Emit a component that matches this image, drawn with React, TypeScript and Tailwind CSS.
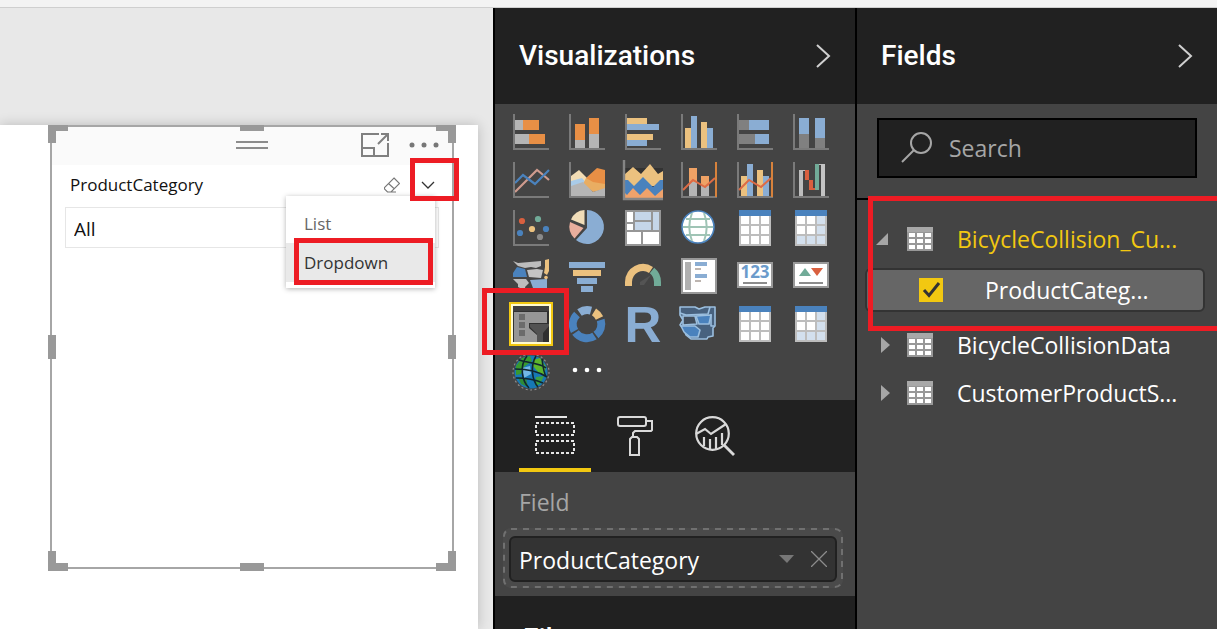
import React from "react";

const ORANGE = "#e88f45";
const BLUE = "#8aadd3";
const DEEP = "#4a82bd";
const YELLOW = "#ebc17f";
const AXIS = "#7a7a7a";
const GREEN = "#71ab98";
const RED = "#d9603f";

type Box = [number, number, number, number, string];

function Boxes({ items }: { items: Box[] }) {
  return (
    <>
      {items.map(([x, y, w, h, fill], i) => (
        <rect key={i} x={x} y={y} width={w} height={h} fill={fill} />
      ))}
    </>
  );
}

function Axes() {
  return <path d="M1 0V35H36" fill="none" stroke={AXIS} strokeWidth="2" />;
}

function TableGlyph({ matrix = false }: { matrix?: boolean }) {
  const cells: Box[] = [];
  for (let r = 0; r < 3; r++) {
    for (let c = 0; c < 3; c++) {
      cells.push([4 + c * 10, 6 + r * 10, 8, 8, matrix && (c === 2 || r === 2) ? "#d3e0ee" : "#ffffff"]);
    }
  }
  return (
    <>
      <rect x="2" y="0" width="32" height="36" fill="#bdbdbd" />
      <rect x="2" y="0" width="32" height="6" fill={DEEP} />
      <Boxes items={cells} />
    </>
  );
}

const COLUMNS: Box[] = [
  [4, 14, 6, 20, YELLOW],
  [10, 2, 6, 32, BLUE],
  [20, 8, 6, 26, YELLOW],
  [26, 14, 6, 20, BLUE],
];

const visuals: { name: string; art: React.ReactNode }[] = [
  {
    name: "Stacked bar chart",
    art: (
      <>
        <Boxes items={[[2, 6, 8, 10, "#b5b5b5"], [10, 6, 16, 10, ORANGE], [2, 20, 14, 10, "#b5b5b5"], [16, 20, 16, 10, ORANGE]]} />
        <Axes />
      </>
    ),
  },
  {
    name: "Stacked column chart",
    art: (
      <>
        <Boxes items={[[6, 10, 10, 16, ORANGE], [6, 26, 10, 8, "#b5b5b5"], [20, 4, 10, 16, ORANGE], [20, 20, 10, 14, "#b5b5b5"]]} />
        <Axes />
      </>
    ),
  },
  {
    name: "Clustered bar chart",
    art: (
      <>
        <Boxes items={[[2, 4, 20, 6, YELLOW], [2, 10, 32, 6, BLUE], [2, 20, 26, 6, YELLOW], [2, 26, 20, 6, BLUE]]} />
        <Axes />
      </>
    ),
  },
  {
    name: "Clustered column chart",
    art: (
      <>
        <Boxes items={COLUMNS} />
        <Axes />
      </>
    ),
  },
  {
    name: "100% stacked bar chart",
    art: (
      <>
        <Boxes items={[[2, 6, 10, 10, "#808080"], [12, 6, 20, 10, BLUE], [2, 20, 16, 10, "#808080"], [18, 20, 14, 10, BLUE]]} />
        <Axes />
      </>
    ),
  },
  {
    name: "100% stacked column chart",
    art: (
      <>
        <Boxes items={[[6, 4, 10, 16, BLUE], [6, 20, 10, 14, "#808080"], [22, 4, 10, 20, BLUE], [22, 24, 10, 10, "#808080"]]} />
        <Axes />
      </>
    ),
  },
  {
    name: "Line chart",
    art: (
      <>
        <path d="M2 30L24 8L29 12L36 18" fill="none" stroke="#cf9b8e" strokeWidth="2.2" />
        <path d="M2 21L10 13L22 22L36 8" fill="none" stroke={DEEP} strokeWidth="2.2" />
        <Axes />
      </>
    ),
  },
  {
    name: "Area chart",
    art: (
      <>
        <path d="M2 14L10 8L18 16L26 26L2 28Z" fill="#f2dcb4" />
        <path d="M2 19L13 16L18 22L2 26Z" fill="#a9cbe8" />
        <path d="M17 16L28 6L36 8V27L24 29Z" fill={ORANGE} />
        <path d="M17 16L24 20L36 22V27L24 30L14 22Z" fill="#e9ad62" />
        <path d="M2 24L14 20L24 30L36 26V34H2Z" fill="#b5b5b5" />
        <Axes />
      </>
    ),
  },
  {
    name: "Stacked area chart",
    art: (
      <>
        <rect x="0" y="6" width="38" height="20" fill="#333" />
        <path d="M0 12L8 5L16 12L25 2L33 12L38 9V24H0Z" fill={YELLOW} />
        <path d="M0 18L3 18L9 24L18 15L28 25L35 18H38V34H0Z" fill={DEEP} />
        <path d="M0 37V31L2 33L8 26L15 33L22 26L30 34L38 27V37Z" fill="#efa26b" />
        <path d="M-1 -2V37H38" fill="none" stroke="#858585" strokeWidth="2.4" />
      </>
    ),
  },
  {
    name: "Line and stacked column chart",
    art: (
      <>
        <Boxes items={[[8, 6, 8, 14, "#efa265"], [8, 20, 8, 14, "#b5b5b5"], [20, 14, 8, 10, "#efa265"], [20, 24, 8, 10, "#b5b5b5"]]} />
        <Axes />
        <path d="M2 28L12 18L24 25L34 16" fill="none" stroke="#dd6b45" strokeWidth="2" />
        <path d="M35 0V35" stroke="#d7823c" strokeWidth="2" />
      </>
    ),
  },
  {
    name: "Line and clustered column chart",
    art: (
      <>
        <Boxes items={COLUMNS} />
        <Axes />
        <path d="M2 28L12 18L24 25L34 16" fill="none" stroke="#dd6b45" strokeWidth="2" />
        <path d="M35 0V35" stroke="#d7823c" strokeWidth="2" />
      </>
    ),
  },
  {
    name: "Waterfall chart",
    art: (
      <>
        <Boxes
          items={[
            [6, 8, 4, 26, "#bdbdbd"],
            [6, 8, 6, 1, "#bdbdbd"],
            [12, 8, 4, 10, RED],
            [16, 18, 4, 10, RED],
            [20, 26, 2, 2, RED],
            [22, 2, 4, 26, GREEN],
            [26, 2, 2, 1, "#bdbdbd"],
            [28, 2, 4, 32, "#c4c4c4"],
          ]}
        />
        <Axes />
      </>
    ),
  },
  {
    name: "Scatter chart",
    art: (
      <>
        <Axes />
        <circle cx="9" cy="11" r="3.1" fill={RED} />
        <circle cx="25" cy="9" r="3.1" fill={GREEN} />
        <circle cx="19" cy="19" r="3.1" fill={YELLOW} />
        <circle cx="7" cy="23" r="3.1" fill={DEEP} />
        <circle cx="33" cy="19" r="3.1" fill={DEEP} />
        <circle cx="27" cy="27" r="3.1" fill="#8a8a8a" />
      </>
    ),
  },
  {
    name: "Pie chart",
    art: (
      <>
        <path d="M18 0A17 17 0 1 1 7 30L18 18Z" fill={BLUE} />
        <path d="M15.5 0V15L2 9.5A16 16 0 0 1 15.5 0Z" fill="#f0dcb8" />
        <path d="M1 12L14.5 18L5.5 28.5A17 17 0 0 1 1 12Z" fill="#e9ae9d" />
      </>
    ),
  },
  {
    name: "Treemap",
    art: (
      <>
        <rect width="36" height="36" fill="#969696" />
        <Boxes
          items={[
            [2, 2, 6, 10, "#fff"],
            [2, 14, 6, 6, "#fff"],
            [10, 2, 16, 8, "#c5d6e9"],
            [10, 12, 16, 8, "#c5d6e9"],
            [28, 2, 6, 18, "#c5d6e9"],
            [2, 22, 14, 12, "#fff"],
            [18, 22, 16, 12, "#fff"],
          ]}
        />
      </>
    ),
  },
  {
    name: "Map",
    art: (
      <>
        <circle cx="17" cy="17" r="16" fill="#fff" stroke={DEEP} strokeWidth="1.6" />
        <path d="M2 17H32M5 9H29M5 25H29M11 3C7.500 12 7.500 22 11 31M23 3C26.500 12 26.500 22 23 31" fill="none" stroke="#9fc4b5" strokeWidth="2" />
      </>
    ),
  },
  { name: "Table", art: <TableGlyph /> },
  { name: "Matrix", art: <TableGlyph matrix /> },
  {
    name: "Filled map",
    art: (
      <>
        <path d="M0 3L5 5L28 3V8L23 10L18 9L12 10L5 8Z" fill="#bdbdbd" />
        <path d="M4 9L12 11L14 19L0 19V15Z" fill={DEEP} />
        <path d="M14 12L24 11L30 12L28 20L16 19Z" fill="#c4c4c4" />
        <path d="M0 21H13L16 25L12 29L13 35L9 31L5 29V26Z" fill="#bdbdbd" />
        <path d="M17 22L34 21V30L30 31L27 30L20 30Z" fill={BLUE} />
        <path d="M32 2L36 1V13L34 17L31 15L32 9Z" fill={YELLOW} />
        <circle cx="33" cy="19.500" r="1.800" fill={YELLOW} />
      </>
    ),
  },
  {
    name: "Funnel",
    art: <Boxes items={[[0, 4, 36, 6, BLUE], [4, 12, 28, 6, YELLOW], [8, 20, 20, 6, BLUE], [12, 28, 12, 6, BLUE]]} />,
  },
  {
    name: "Gauge",
    art: (
      <>
        <path d="M3.500 28V24A14.500 15 0 0 1 26 12" fill="none" stroke={YELLOW} strokeWidth="7" />
        <path d="M27 12.500A15 15 0 0 1 32.500 24V28" fill="none" stroke={GREEN} strokeWidth="7" />
        <path d="M26 17L19 27H15V24Z" fill="#545454" />
      </>
    ),
  },
  {
    name: "Multi-row card",
    art: (
      <>
        <rect x="1" y="1" width="34" height="34" fill="#fff" stroke="#999" strokeWidth="2" />
        <Boxes
          items={[
            [4, 4, 6, 28, "#b0b0b0"],
            [14, 4, 12, 4, BLUE],
            [14, 10, 6, 2, "#bdb5b0"],
            [14, 16, 12, 4, BLUE],
            [14, 22, 6, 2, "#bdb5b0"],
          ]}
        />
      </>
    ),
  },
  {
    name: "Card",
    art: (
      <>
        <rect x="1" y="5" width="34" height="24" fill="#fff" stroke="#999" strokeWidth="2" />
        <text x="18" y="20" textAnchor="middle" fontFamily="Open Sans, sans-serif" fontWeight="700" fontSize="17" fill="#6b9bcb">
          123
        </text>
        <rect x="6" y="24" width="24" height="2" fill="#8c8c8c" />
      </>
    ),
  },
  {
    name: "KPI",
    art: (
      <>
        <rect x="1" y="5" width="34" height="24" fill="#fff" stroke="#999" strokeWidth="2" />
        <path d="M6 18L12 10L18 18Z" fill={GREEN} />
        <path d="M18 10H30L24 18Z" fill={RED} />
        <rect x="6" y="24" width="24" height="2" fill="#8c8c8c" />
      </>
    ),
  },
  {
    name: "Slicer",
    art: (
      <>
        <rect width="36" height="36" fill="#303030" />
        <rect width="36" height="5" fill="#3f3f3f" />
        <path d="M1 6H34V17H16V22L24 29V36H1Z" fill="#969696" />
        <Boxes items={[[6, 8, 6, 6, "#6b6b6b"], [6, 16, 6, 6, "#6b6b6b"], [6, 24, 6, 6, "#6b6b6b"]]} />
        <path d="M17 18H36V20L30 27V36H24V28L17 21Z" fill="#525252" />
      </>
    ),
  },
  {
    name: "Donut chart",
    art: (
      <g fill="none" strokeWidth="8">
        <path d="M10.500 6.500A14 14 0 0 1 22 4.600" stroke={BLUE} />
        <path d="M25 5.800A14 14 0 0 1 30.500 12" stroke={YELLOW} />
        <path d="M31.700 14A14 14 0 0 1 27 29" stroke={DEEP} />
        <path d="M25.500 30A14 14 0 0 1 6.500 26.500" stroke={DEEP} />
        <path d="M5.500 25A14 14 0 0 1 8 8.500" stroke={DEEP} />
      </g>
    ),
  },
  {
    name: "R script visual",
    art: (
      <text x="18" y="36" textAnchor="middle" fontFamily="Liberation Sans, sans-serif" fontWeight="700" fontSize="51" fill={BLUE} textRendering="geometricPrecision">
        R
      </text>
    ),
  },
  {
    name: "Shape map",
    art: (
      <g stroke="#9bbfdf" strokeWidth="1.6" strokeLinejoin="round">
        <path d="M-1 1H14L18 3L24 1H34V20L32 22V30L27 31L26 33H10L5 29L3 23L-1 19L2 14L-1 9Z" fill="#48627f" />
        <path d="M-1 7L5 9L27 8L29 1" fill="none" />
        <path d="M2 10H14L16 18L2 19Z" fill="#414d5b" />
        <path d="M15 10L30 9L28 18L18 18Z" fill={DEEP} />
        <path d="M0 20H14L19 24L17 31H9L3 26Z" fill={DEEP} />
        <path d="M30 8V20H33" fill="none" />
      </g>
    ),
  },
  { name: "Table heatmap", art: <TableGlyph /> },
  { name: "Matrix heatmap", art: <TableGlyph matrix /> },
  {
    name: "ArcGIS map",
    art: (
      <>
        <circle cx="18" cy="18" r="18" fill="none" stroke="#8e8e8e" strokeWidth="1.2" strokeDasharray="2 2.500" />
        <circle cx="18" cy="18" r="16.500" fill="#1778b5" />
        <path d="M3 12L9 4L17 2L19 7L11 13L8 20L3 21Z" fill="#39992f" />
        <path d="M20 6L27 4L33 13L31 21L25 18L20 12Z" fill="#5cb52c" />
        <path d="M5 23L13 24L15 33L8 30Z" fill="#2e8b38" />
        <path d="M23 23L31 22L27 30L22 32Z" fill="#3da040" />
        <path d="M9 14L17 12L18 20L11 24Z" fill="#73b9e7" />
        <path d="M14 2C6 12 9 27 16 34M23 2C17 12 19 26 25 33M6 6C15 9 27 9 33 14M2 15C13 15 25 17 34 23M3 24C13 24 23 26 30 29M29 5C30 13 31 20 33 22" fill="none" stroke="#10262f" strokeWidth="1.600" />
      </>
    ),
  },
];

function Chevron() {
  return (
    <svg className="h-6 w-4" viewBox="0 0 16 24" fill="none" stroke="#d0d0d0" strokeWidth="2" aria-hidden="true">
      <path d="M2 1L14 12L2 23" />
    </svg>
  );
}

function PaneHeader({ title }: { title: string }) {
  return (
    <header className="flex h-24 shrink-0 items-center justify-between bg-[#212121] px-6">
      <h2 className="font-['Roboto',sans-serif] text-[28px] leading-8 font-medium text-white">{title}</h2>
      <button aria-label={`Collapse ${title}`}>
        <Chevron />
      </button>
    </header>
  );
}

function Highlight({ className }: { className: string }) {
  return <span aria-hidden="true" className={`pointer-events-none absolute z-20 border-[5px] border-[#ed1c24] ${className}`} />;
}

function TableIcon() {
  return (
    <svg className="h-6 w-[26px] shrink-0" viewBox="0 0 26 24" aria-hidden="true">
      <rect width="26" height="24" fill="#a8a8a8" />
      <rect y="5" width="26" height="19" fill="#989898" />
      {[6, 12, 18].map((y) => [2, 10, 18].map((x) => <rect key={`${x}-${y}`} x={x} y={y} width="6" height="4" fill="#fff" />))}
    </svg>
  );
}

function TableRow({ name, open = false }: { name: string; open?: boolean }) {
  return (
    <button aria-expanded={open} className="flex h-12 w-full items-center pl-[18px] text-left">
      <svg className="h-4 w-4 shrink-0" viewBox="0 0 16 16" fill="#a6a6a6" aria-hidden="true">
        {open ? <path d="M13 2V14H1Z" /> : <path d="M6 0L15 8L6 16Z" />}
      </svg>
      <span className="ml-4">
        <TableIcon />
      </span>
      <span className={`ml-6 text-[23px] leading-8 ${open ? "text-[#f2c811]" : "text-white"}`}>{name}</span>
    </button>
  );
}

function Handles() {
  return (
    <span aria-hidden="true" className="pointer-events-none">
      <span className="absolute -top-0.5 -left-1 h-[18px] w-5 border-t-[6px] border-l-8 border-[#999]" />
      <span className="absolute -top-0.5 -right-1 h-[18px] w-5 border-t-[6px] border-r-8 border-[#999]" />
      <span className="absolute -bottom-1 -left-1 h-5 w-5 border-b-8 border-l-8 border-[#999]" />
      <span className="absolute -right-1 -bottom-1 h-5 w-5 border-r-8 border-b-8 border-[#999]" />
      <span className="absolute -top-0.5 left-1/2 h-1.5 w-6 -translate-x-1/2 bg-[#999]" />
      <span className="absolute -bottom-1 left-1/2 h-2 w-6 -translate-x-1/2 bg-[#999]" />
      <span className="absolute top-1/2 -left-1 h-6 w-2 -translate-y-1/2 bg-[#999]" />
      <span className="absolute top-1/2 -right-1 h-6 w-2 -translate-y-1/2 bg-[#999]" />
    </span>
  );
}

function SlicerVisual() {
  return (
    <section className="relative mr-6 ml-[50px] h-[444px] border-2 border-[#a6a6a6] bg-white">
      <Handles />
      <div className="grid h-[38px] grid-cols-3 items-center bg-[#fafafa] pb-0.5">
        <span />
        <svg className="h-2 w-8 justify-self-center" viewBox="0 0 32 8" fill="#8c8c8c" aria-hidden="true">
          <path d="M0 0H32V2H0ZM0 6H32V8H0Z" />
        </svg>
        <div className="flex items-center justify-end gap-5 pr-[13px]">
          <button aria-label="Focus mode">
            <svg className="h-6 w-7" viewBox="0 0 28 24" fill="none" stroke="#808080" strokeWidth="2" aria-hidden="true">
              <path d="M18 1H1V23H27V10M1 15H13V23M17 11L26 2M20 1H27V8" />
            </svg>
          </button>
          <button aria-label="More options">
            <svg className="h-6 w-[30px]" viewBox="0 0 30 24" fill="#777" aria-hidden="true">
              <circle cx="3" cy="12" r="2.5" />
              <circle cx="15" cy="12" r="2.5" />
              <circle cx="27" cy="12" r="2.5" />
            </svg>
          </button>
        </div>
      </div>

      <div className="flex h-10 items-center pr-4 pl-[18px]">
        <label htmlFor="category" className="flex-1 text-[17px] leading-6 text-[#111]">
          ProductCategory
        </label>
        <button aria-label="Clear selections">
          <svg className="h-4 w-4" viewBox="0 0 16 16" fill="none" stroke="#777" strokeWidth="1.1" aria-hidden="true">
            <path d="M10 1L15.500 6.500L7 15H3.500L.5 12V10.500ZM4.500 6.500L10.500 12M3 15H12" />
          </svg>
        </button>
        <div className="relative ml-5 flex">
          <button aria-label="Slicer type" aria-expanded="true">
            <svg className="h-4 w-4" viewBox="0 0 16 16" fill="none" stroke="#333" strokeWidth="1.3" aria-hidden="true">
              <path d="M2 5L8 11L14 5" />
            </svg>
          </button>
          <Highlight className="-top-[19px] -right-[23px] h-[43px] w-[49px]" />
        </div>
      </div>

      <div className="mx-[13px] mt-0.5">
        <select id="category" className="h-[41px] w-full appearance-none border border-[#e6e6e6] bg-white px-2 pt-1 text-[19px] text-[#111]">
          <option>All</option>
        </select>
      </div>

      <div role="menu" className="absolute top-[69px] right-[17px] z-10 w-[149px] bg-white pt-2 pb-1.5 shadow-[0_1px_5px_rgba(0,0,0,0.3)]">
        <button role="menuitem" className="block h-[39px] w-full px-[18px] text-left text-[17px] text-[#666]">
          List
        </button>
        <button role="menuitem" className="relative block h-[39px] w-full bg-[#e9e9e9] px-[18px] text-left text-[17px] text-[#333]">
          Dropdown
          <Highlight className="-top-[5px] right-0.5 h-[47px] left-2" />
        </button>
      </div>
    </section>
  );
}

function Visualizations() {
  return (
    <aside className="flex w-[362px] shrink-0 flex-col border-l-2 border-black bg-[#444]">
      <PaneHeader title="Visualizations" />
      <div className="grid shrink-0 grid-cols-[repeat(6,36px)] gap-x-5 gap-y-3 pt-2.5 pb-2.5 pl-[18px]">
        {visuals.map(({ name, art }) => (
          <button key={name} aria-label={name} className="relative h-9 w-9">
            {name === "Slicer" && (
              <>
                <span className="absolute -inset-1 border-2 border-[#f2c811] bg-[#fffbcf]" />
                <Highlight className="-top-[18px] -left-[31px] h-[67px] w-[87px]" />
              </>
            )}
            <svg className="relative h-9 w-9 overflow-visible" viewBox="0 0 36 36" aria-hidden="true">
              {art}
            </svg>
          </button>
        ))}
        <button aria-label="Import a custom visual" className="h-9 w-9">
          <svg className="h-9 w-9" viewBox="0 0 36 36" fill="#fff" aria-hidden="true">
            <circle cx="6" cy="16" r="2.3" />
            <circle cx="18" cy="16" r="2.3" />
            <circle cx="30" cy="16" r="2.3" />
          </svg>
        </button>
      </div>

      <div role="tablist" className="flex h-[72px] shrink-0 gap-2 bg-[#212121] pl-6">
        <button role="tab" aria-selected="true" aria-label="Fields" className="flex w-[72px] items-center justify-center border-b-4 border-[#f2c811] pt-1">
          <svg className="h-10 w-10" viewBox="0 0 40 40" fill="none" stroke="#e6e6e6" strokeWidth="2" aria-hidden="true">
            <path d="M0 1H32" />
            <path d="M1 7H39V19H1ZM1 25H39V37H1Z" strokeDasharray="3 2" />
          </svg>
        </button>
        <button role="tab" aria-selected="false" aria-label="Format" className="flex w-[72px] items-center justify-center">
          <svg className="h-10 w-10" viewBox="0 0 40 40" fill="none" stroke="#d9d9d9" strokeWidth="2" aria-hidden="true">
            <rect x="3" y="1" width="28" height="9" rx="2" />
            <path d="M31 5H37V14L36 15H20L18 17V21" />
            <path d="M15 39V23L17 21H22L24 23V39Z" />
          </svg>
        </button>
        <button role="tab" aria-selected="false" aria-label="Analytics" className="flex w-[72px] items-center justify-center">
          <svg className="h-10 w-10" viewBox="0 0 40 40" fill="none" stroke="#d9d9d9" strokeWidth="2.2" aria-hidden="true">
            <circle cx="17.500" cy="17.500" r="16.300" />
            <path d="M29 29L39 39" strokeWidth="2.800" />
            <path d="M1 18L10 13L16 18L31 8M9 21V30M15 23V33M21 21V33M27 17V29" />
          </svg>
        </button>
      </div>

      <div className="h-[124px] shrink-0 px-2">
        <h3 className="pt-3.5 pl-4 text-[23px] leading-8 text-[#a6a6a6]">Field</h3>
        <div className="relative mt-2.5 mr-1 h-[60px] rounded-lg bg-[#4a4a4a] px-1.5 pt-2">
          <svg className="absolute inset-0 h-full w-full" aria-hidden="true">
            <rect x="1" y="1" width="338" height="58" rx="7" fill="none" stroke="#707070" strokeWidth="2" strokeDasharray="6 6" />
          </svg>
          <div className="relative flex h-[46px] items-center rounded-md border-2 border-[#212121] bg-[#333] px-2">
            <span className="flex-1 pt-0.5 text-[23px] leading-8 text-white">ProductCategory</span>
            <button aria-label="Field options">
              <svg className="h-2 w-4" viewBox="0 0 16 8" fill="#777" aria-hidden="true">
                <path d="M0 0H15L8 8Z" />
              </svg>
            </button>
            <button aria-label="Remove field" className="ml-4">
              <svg className="h-4 w-4" viewBox="0 0 16 16" stroke="#8c8c8c" strokeWidth="1.3" aria-hidden="true">
                <path d="M0 0L16 16M16 0L0 16" />
              </svg>
            </button>
          </div>
        </div>
      </div>

      <div className="flex-1 bg-[#212121] pt-[25px] pl-7">
        <h2 className="font-['Roboto',sans-serif] text-[28px] leading-9 font-medium text-white">Filters</h2>
      </div>
    </aside>
  );
}

function Fields() {
  return (
    <aside className="w-[362px] shrink-0 border-l-2 border-black bg-[#444]">
      <PaneHeader title="Fields" />
      <div className="border-b-2 border-black px-5 pt-3.5 pb-5">
        <label className="flex h-[60px] items-center border-2 border-black bg-[#212121] pl-[22px]">
          <svg className="h-8 w-8 shrink-0" viewBox="0 0 32 32" fill="none" stroke="#a6a6a6" strokeWidth="2" aria-label="Search fields">
            <circle cx="20" cy="11" r="10" />
            <path d="M13 18L1 30" />
          </svg>
          <input type="search" placeholder="Search" className="ml-4 w-full min-w-0 bg-transparent text-[23px] leading-8 text-white outline-none placeholder:text-[#a6a6a6]" />
        </label>
      </div>
      <div className="relative pt-[15px]">
        <TableRow name="BicycleCollision_Cu..." open />
        <label className="mt-[5px] mr-3 mb-[9px] ml-2 flex h-11 items-center rounded-md border-2 border-[#333] bg-[#666] pl-[52px]">
          <span className="relative flex h-6 w-6">
            <input type="checkbox" defaultChecked className="h-6 w-6 appearance-none bg-[#f2c811]" />
            <svg className="pointer-events-none absolute inset-0" viewBox="0 0 24 24" fill="none" stroke="#333" strokeWidth="3" aria-hidden="true">
              <path d="M5 12L10 17.500L20 5" />
            </svg>
          </span>
          <span className="ml-[42px] text-[23px] leading-8 text-white">ProductCateg...</span>
        </label>
        <TableRow name="BicycleCollisionData" />
        <TableRow name="CustomerProductS..." />
        <Highlight className="-top-1 -right-1.5 left-[11px] h-[135px]" />
      </div>
    </aside>
  );
}

export default function App() {
  return (
    <div className="flex h-screen flex-col overflow-hidden bg-[#e8e8e8] font-['Open_Sans','Noto_Sans',sans-serif]">
      <div className="h-2 shrink-0 border-b border-[#cfcfcf] bg-[#f3f3f3]" />
      <div className="flex min-h-0 flex-1">
        <main className="flex min-w-0 flex-1 flex-col overflow-hidden pt-[117px]">
          <div className="mr-[15px] flex-1 bg-white shadow-[0_0_12px_rgba(0,0,0,0.2)]">
            <SlicerVisual />
          </div>
        </main>
        <Visualizations />
        <Fields />
      </div>
    </div>
  );
}
